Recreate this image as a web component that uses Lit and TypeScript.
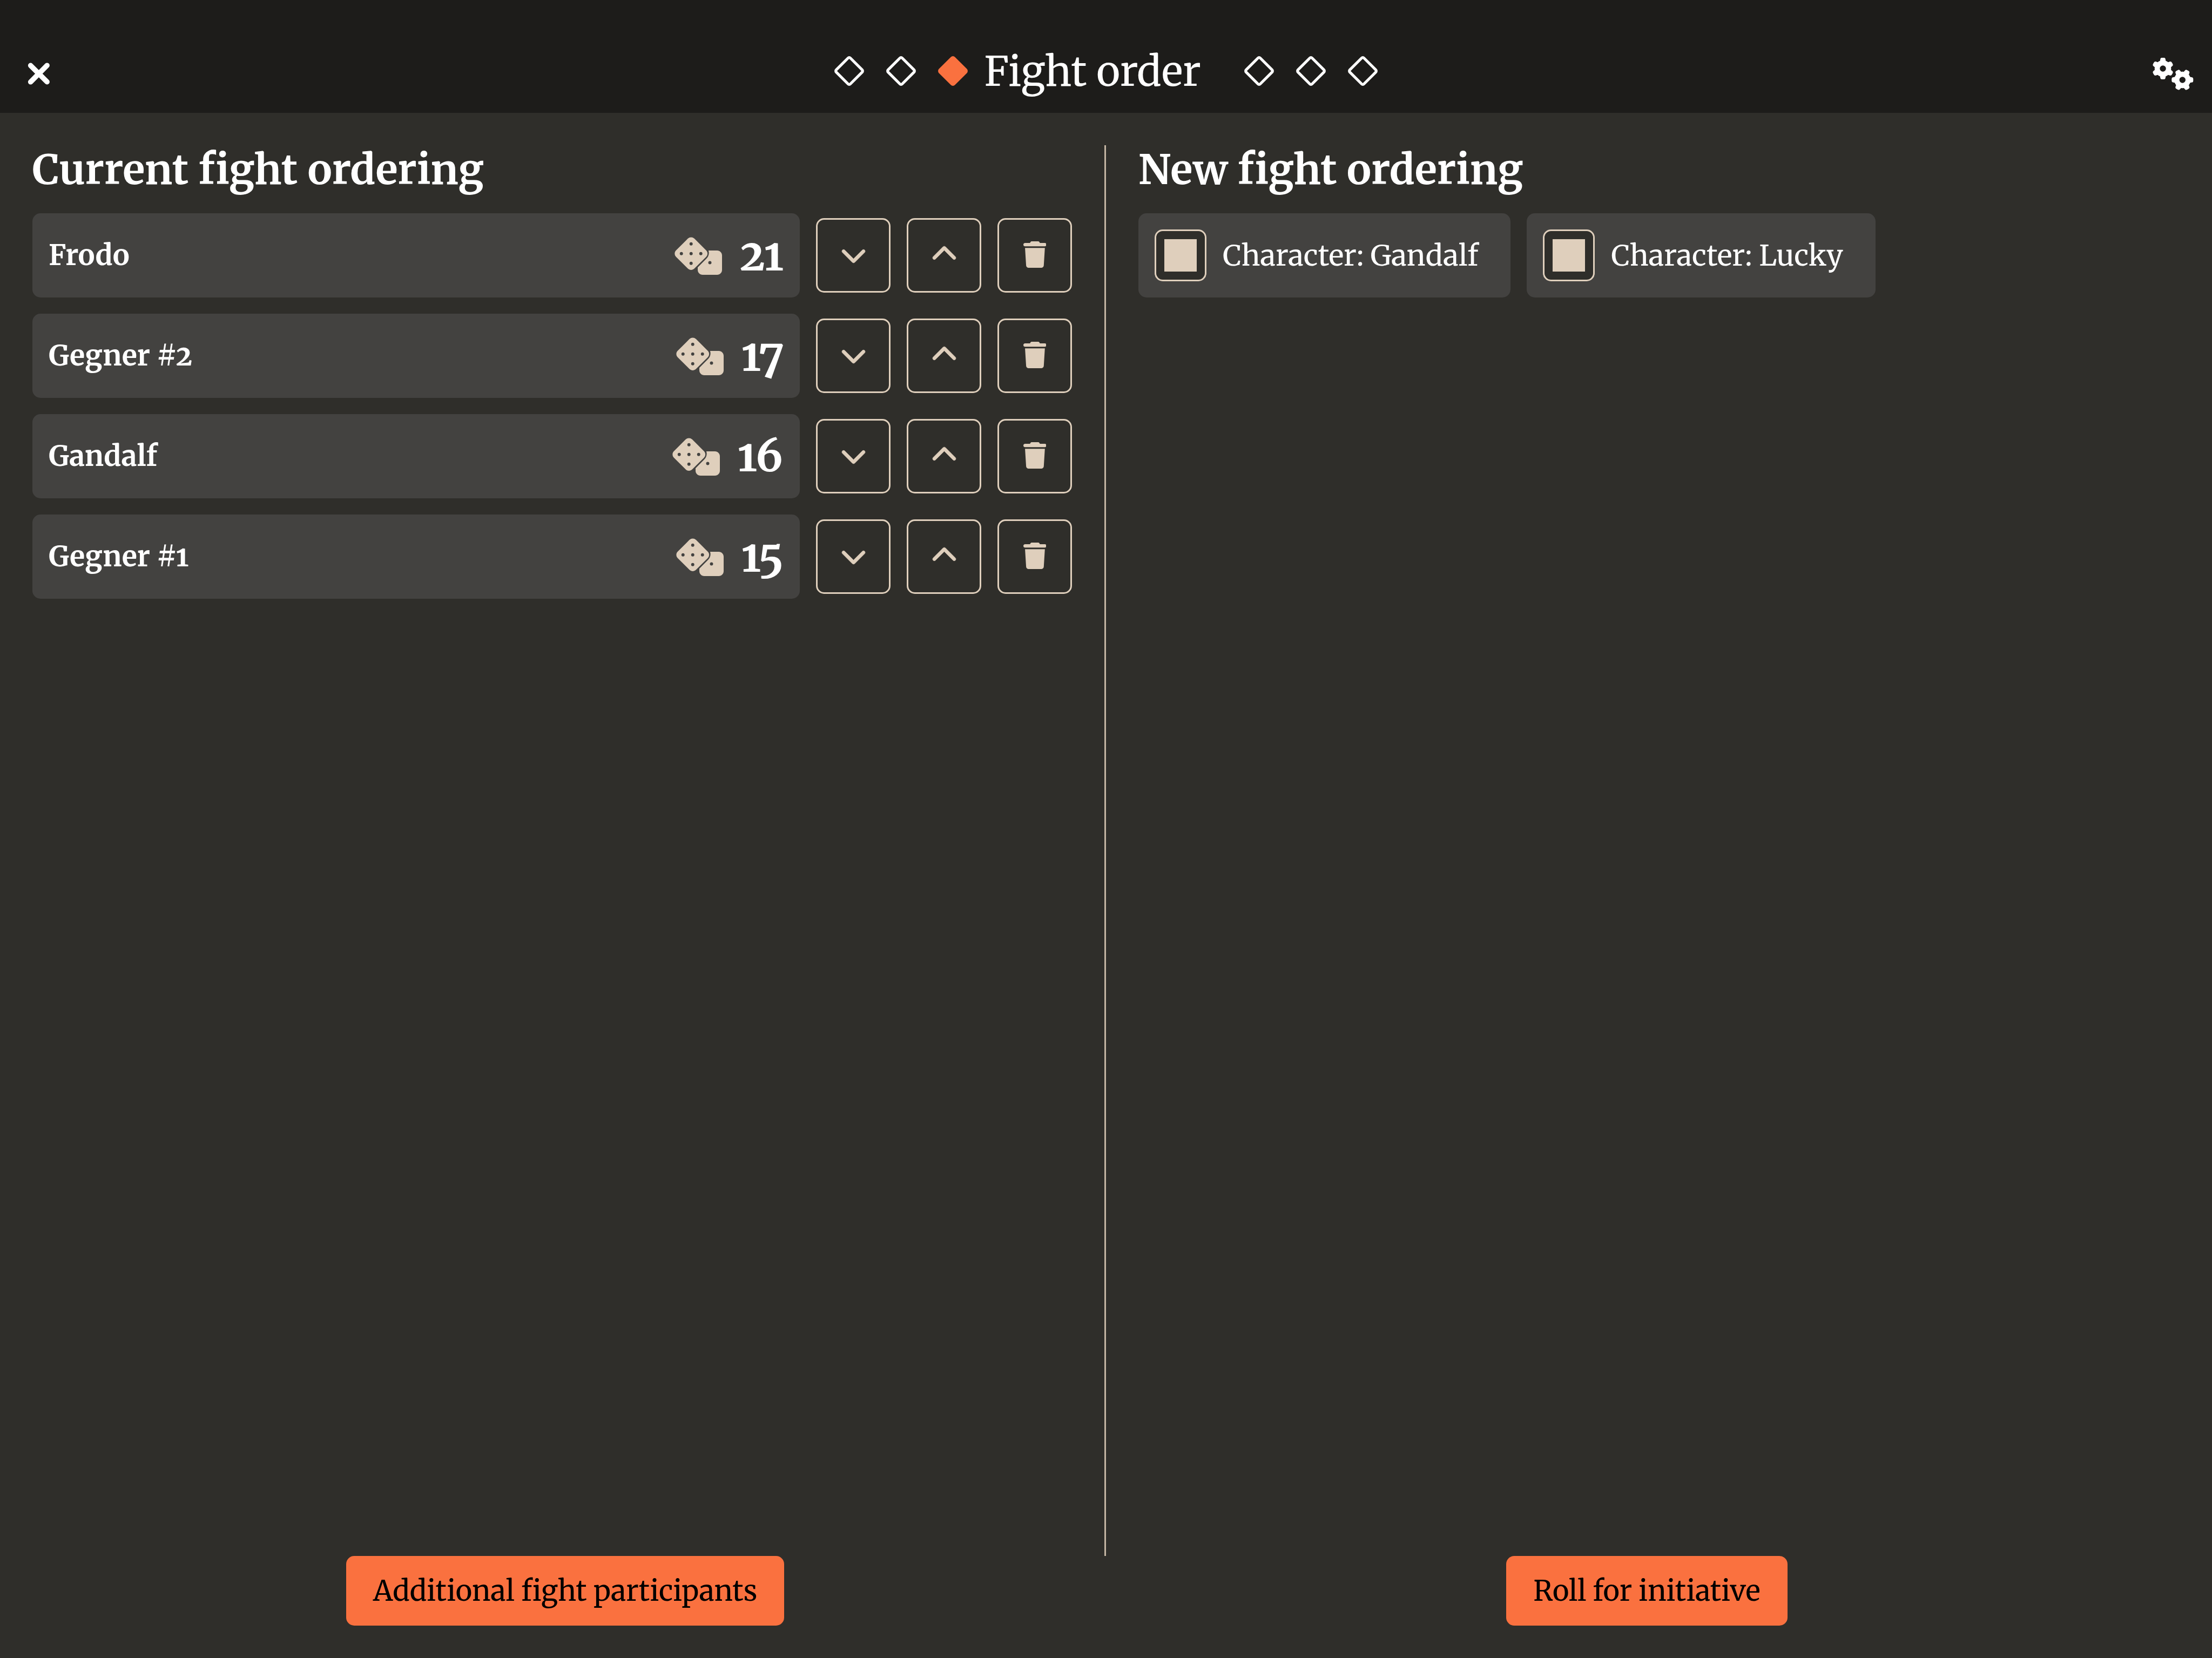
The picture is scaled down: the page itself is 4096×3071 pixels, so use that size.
import { LitElement, html, css, svg } from "lit";
import { customElement, property, state } from "lit/decorators.js";
import { classMap } from "lit/directives/class-map.js";

interface Fighter {
  name: string;
  initiative: number;
}

interface Candidate {
  label: string;
  selected: boolean;
}

const GEAR =
  "M308.5 135.3c7.1-6.3 9.9-16.2 6.2-25c-2.3-5.3-4.8-10.5-7.6-15.5L304 89.4c-3-5-6.3-9.9-9.8-14.6c-5.7-7.6-15.7-10.1-24.7-7.1l-28.2 9.3c-10.7-8.8-23-16-36.2-20.9L199 27.1c-1.9-9.3-9.1-16.7-18.5-17.8C173.9 8.4 167.2 8 160.4 8h-.7c-6.8 0-13.5 .4-20.1 1.2c-9.4 1.1-16.6 8.6-18.5 17.8L115 56.1c-13.3 5-25.5 12.1-36.2 20.9L50.5 67.8c-9-3-19-.5-24.7 7.1c-3.5 4.7-6.8 9.6-9.9 14.6l-3 5.3c-2.8 5-5.3 10.2-7.6 15.6c-3.7 8.7-.9 18.6 6.2 25l22.2 19.8C32.6 161.9 32 168.9 32 176s.6 14.1 1.7 20.9L11.5 216.7c-7.1 6.3-9.9 16.2-6.2 25c2.3 5.3 4.8 10.5 7.6 15.6l3 5.2c3 5.1 6.3 9.9 9.9 14.6c5.7 7.6 15.7 10.1 24.7 7.1l28.2-9.3c10.7 8.8 23 16 36.2 20.9l6.1 29.1c1.9 9.3 9.1 16.7 18.5 17.8c6.7 .8 13.5 1.2 20.4 1.2s13.7-.4 20.4-1.2c9.4-1.1 16.6-8.6 18.5-17.8l6.1-29.1c13.3-5 25.5-12.1 36.2-20.9l28.2 9.3c9 3 19 .5 24.7-7.1c3.5-4.7 6.8-9.5 9.8-14.6l3.1-5.4c2.8-5 5.3-10.2 7.6-15.5c3.7-8.7 .9-18.6-6.2-25l-22.2-19.8c1.1-6.8 1.7-13.8 1.7-20.9s-.6-14.1-1.7-20.9l22.2-19.8zM112 176a48 48 0 1 1 96 0 48 48 0 1 1 -96 0z";

const ICONS = {
  close: {
    box: "0 0 384 512",
    body: svg`<path stroke="currentColor" stroke-width="16" d="M342.6 150.6c12.5-12.5 12.5-32.8 0-45.3s-32.8-12.5-45.3 0L192 210.7 86.6 105.4c-12.5-12.5-32.8-12.5-45.3 0s-12.5 32.8 0 45.3L146.7 256 41.4 361.4c-12.5 12.5-12.5 32.8 0 45.3s32.8 12.5 45.3 0L192 301.3 297.4 406.6c12.5 12.5 32.8 12.5 45.3 0s12.5-32.8 0-45.3L237.3 256 342.6 150.6z"/>`,
  },
  gears: {
    box: "0 0 640 512",
    body: svg`<path d=${GEAR}/><path d=${GEAR} transform="translate(464 352) rotate(90) translate(-160 -176)"/>`,
  },
  dice: {
    box: "0 0 640 512",
    body: svg`<path fill-rule="evenodd" d="M274.9 34.4c-23.3-23.3-61.1-23.3-84.4 0L34.4 190.5c-23.3 23.3-23.3 61.1 0 84.4L190.5 431.1c23.3 23.3 61.1 23.3 84.4 0L431.1 274.9c23.3-23.3 23.3-61.1 0-84.4L274.9 34.4zM211.7 232.7a21 21 0 1 1 42 0 21 21 0 1 1 -42 0zM83.7 232.7a21 21 0 1 1 42 0 21 21 0 1 1 -42 0zM339.7 232.7a21 21 0 1 1 42 0 21 21 0 1 1 -42 0zM211.7 104.7a21 21 0 1 1 42 0 21 21 0 1 1 -42 0zM211.7 360.7a21 21 0 1 1 42 0 21 21 0 1 1 -42 0zM461.7 192c11.6 36 3.1 77-25.4 105.5L320 413.8V448c0 35.3 28.7 64 64 64H576c35.3 0 64-28.7 64-64V256c0-35.3-28.7-64-64-64H461.7zM459 352a21 21 0 1 1 42 0 21 21 0 1 1 -42 0z"/>`,
  },
  down: {
    box: "0 0 512 512",
    body: svg`<path stroke="currentColor" stroke-width="8" d="M233.4 406.6c12.5 12.5 32.8 12.5 45.3 0l192-192c12.5-12.5 12.5-32.8 0-45.3s-32.8-12.5-45.3 0L256 338.7 86.6 169.4c-12.5-12.5-32.8-12.5-45.3 0s-12.5 32.8 0 45.3l192 192z"/>`,
  },
  up: {
    box: "0 0 512 512",
    body: svg`<path stroke="currentColor" stroke-width="8" d="M233.4 105.4c12.5-12.5 32.8-12.5 45.3 0l192 192c12.5 12.5 12.5 32.8 0 45.3s-32.8 12.5-45.3 0L256 173.3 86.6 342.6c-12.5 12.5-32.8 12.5-45.3 0s-12.5-32.8 0-45.3l192-192z"/>`,
  },
  trash: {
    box: "0 0 448 512",
    body: svg`<path d="M135.2 17.7L128 32H32C14.3 32 0 46.3 0 64S14.3 96 32 96H416c17.7 0 32-14.3 32-32s-14.3-32-32-32H320l-7.2-14.3C307.4 6.8 296.3 0 284.2 0H163.8c-12.1 0-23.2 6.8-28.6 17.7zM416 128H32L53.2 467c1.6 25.3 22.6 45 47.9 45H346.9c25.3 0 46.3-19.7 47.9-45L416 128z"/>`,
  },
  diamond: {
    box: "0 0 55 55",
    body: svg`<rect x="-18.5" y="-18.5" width="37" height="37" rx="3" transform="translate(27.5 27.5) rotate(45)" fill="var(--diamond-fill, none)" stroke="currentColor" stroke-width="5"/>`,
  },
};

@customElement("ui-icon")
class UiIcon extends LitElement {
  @property() name: keyof typeof ICONS = "close";

  static styles = css`
    :host {
      display: block;
      height: 1em;
      line-height: 0;
    }
    .glyph {
      display: block;
      height: 1em;
      width: auto;
      fill: currentColor;
    }
  `;

  render() {
    const icon = ICONS[this.name];
    return html`<svg class="glyph" viewBox=${icon.box} aria-hidden="true">${icon.body}</svg>`;
  }
}

@customElement("app-root")
class AppRoot extends LitElement {
  @state() private fighters: Fighter[] = [
    { name: "Frodo", initiative: 21 },
    { name: "Gegner #2", initiative: 17 },
    { name: "Gandalf", initiative: 16 },
    { name: "Gegner #1", initiative: 15 },
  ];

  @state() private candidates: Candidate[] = [
    { label: "Character: Gandalf", selected: true },
    { label: "Character: Lucky", selected: true },
  ];

  @state() private page = 2;

  static styles = css`
    :host {
      --beige: #dfcfbc;
      --ground: #2f2e2a;
      --card: #434240;
      --accent: #fa713f;
      display: flex;
      flex-direction: column;
      min-height: 100vh;
      box-sizing: border-box;
      background: var(--ground);
      color: #fff;
      font-family: "Merriweather", "DejaVu Serif", serif;
      font-optical-sizing: none;
      font-variant-numeric: oldstyle-nums;
      font-size: 52px;
      font-weight: 450;
      line-height: 72px;
    }
    * {
      box-sizing: border-box;
    }
    button {
      font: inherit;
      color: inherit;
      margin: 0;
      padding: 0;
      border: 0;
      background: none;
      cursor: pointer;
    }
    .bar {
      display: grid;
      grid-template-columns: 1fr auto 1fr;
      align-items: center;
      height: 209px;
      padding: 54px 34px 0;
      background: #1d1c1a;
    }
    .tool {
      justify-self: start;
      padding: 10px 0 0 15px;
      font-size: 61px;
    }
    .tool.end {
      justify-self: end;
    }
    .pager {
      display: flex;
      align-items: center;
    }
    .dots {
      display: flex;
      gap: 41px;
      font-size: 55px;
    }
    .dot.current {
      --diamond-fill: currentColor;
      color: var(--accent);
    }
    .title {
      margin: 0;
      padding: 0 80px 0 30px;
      font-size: 75px;
      font-weight: 450;
      line-height: 90px;
    }
    .columns {
      flex: 1;
      display: grid;
      grid-template-columns: 1fr 1fr;
      margin-top: 60px;
    }
    .column {
      min-width: 0;
      padding: 0 60px;
    }
    .column.first {
      border-right: 3px solid #c4b5a3;
    }
    .heading {
      margin: 0 0 36px;
      font-size: 76px;
      font-weight: 700;
      line-height: 90px;
    }
    .list {
      display: flex;
      flex-direction: column;
      gap: 30px;
      margin: 0;
      padding: 0;
      list-style: none;
    }
    .row {
      display: flex;
      align-items: center;
      gap: 30px;
    }
    .card {
      display: flex;
      align-items: center;
      gap: 30px;
      height: 156px;
      padding: 0 30px;
      border-radius: 15px;
      background: var(--card);
    }
    .row .card {
      flex: 1;
      font-weight: 700;
    }
    .name {
      flex: 1;
    }
    .roll {
      display: flex;
      align-items: center;
      gap: 32px;
    }
    .dice {
      color: var(--beige);
      font-size: 72px;
    }
    .value {
      font-size: 80px;
    }
    .action {
      display: grid;
      place-items: center;
      width: 138px;
      height: 138px;
      padding-bottom: 3px;
      border: 3px solid var(--beige);
      border-radius: 15px;
      color: var(--beige);
      font-size: 49px;
    }
    .choices {
      display: flex;
      flex-wrap: wrap;
      gap: 30px;
    }
    .choice {
      padding-right: 60px;
      font-size: 53px;
      cursor: pointer;
    }
    .tick {
      appearance: none;
      width: 96px;
      height: 96px;
      margin: 0;
      padding: 15px;
      border: 3px solid var(--beige);
      border-radius: 15px;
      background: var(--ground);
    }
    .tick:checked {
      background: linear-gradient(var(--beige), var(--beige)) content-box, var(--ground);
    }
    .actions {
      display: grid;
      grid-template-columns: 1fr 1fr;
      gap: 30px;
      justify-items: center;
      padding: 0 60px 60px;
    }
    .primary {
      height: 129px;
      padding: 0 50px;
      border-radius: 15px;
      background: var(--accent);
      color: #000;
    }
  `;

  private move(index: number, step: number) {
    const target = index + step;
    if (target < 0 || target >= this.fighters.length) return;
    const next = [...this.fighters];
    [next[index], next[target]] = [next[target], next[index]];
    this.fighters = next;
  }

  private remove(index: number) {
    this.fighters = this.fighters.filter((_, i) => i !== index);
  }

  private toggle(index: number) {
    this.candidates = this.candidates.map((c, i) => (i === index ? { ...c, selected: !c.selected } : c));
  }

  private dots(pages: number[]) {
    return html`<div class="dots">
      ${pages.map(
        (p) => html`<button
          class=${classMap({ dot: true, current: p === this.page })}
          aria-label="Page ${p + 1}"
          @click=${() => (this.page = p)}
        >
          <ui-icon name="diamond"></ui-icon>
        </button>`
      )}
    </div>`;
  }

  render() {
    return html`
      <header class="bar">
        <button class="tool" aria-label="Close"><ui-icon name="close"></ui-icon></button>
        <div class="pager">
          ${this.dots([0, 1, 2])}
          <h1 class="title">Fight order</h1>
          ${this.dots([3, 4, 5])}
        </div>
        <button class="tool end" aria-label="Settings"><ui-icon name="gears"></ui-icon></button>
      </header>
      <main class="columns">
        <section class="column first">
          <h2 class="heading">Current fight ordering</h2>
          <ol class="list">
            ${this.fighters.map(
              (f, i) => html`<li class="row">
                <div class="card">
                  <span class="name">${f.name}</span>
                  <span class="roll">
                    <ui-icon class="dice" name="dice"></ui-icon>
                    <span class="value">${f.initiative}</span>
                  </span>
                </div>
                <button class="action" aria-label="Move down" @click=${() => this.move(i, 1)}>
                  <ui-icon name="down"></ui-icon>
                </button>
                <button class="action" aria-label="Move up" @click=${() => this.move(i, -1)}>
                  <ui-icon name="up"></ui-icon>
                </button>
                <button class="action" aria-label="Remove" @click=${() => this.remove(i)}>
                  <ui-icon name="trash"></ui-icon>
                </button>
              </li>`
            )}
          </ol>
        </section>
        <section class="column">
          <h2 class="heading">New fight ordering</h2>
          <div class="choices">
            ${this.candidates.map(
              (c, i) => html`<label class="card choice">
                <input class="tick" type="checkbox" .checked=${c.selected} @change=${() => this.toggle(i)} />
                <span>${c.label}</span>
              </label>`
            )}
          </div>
        </section>
      </main>
      <footer class="actions">
        <button class="primary">Additional fight participants</button>
        <button class="primary">Roll for initiative</button>
      </footer>
    `;
  }
}
